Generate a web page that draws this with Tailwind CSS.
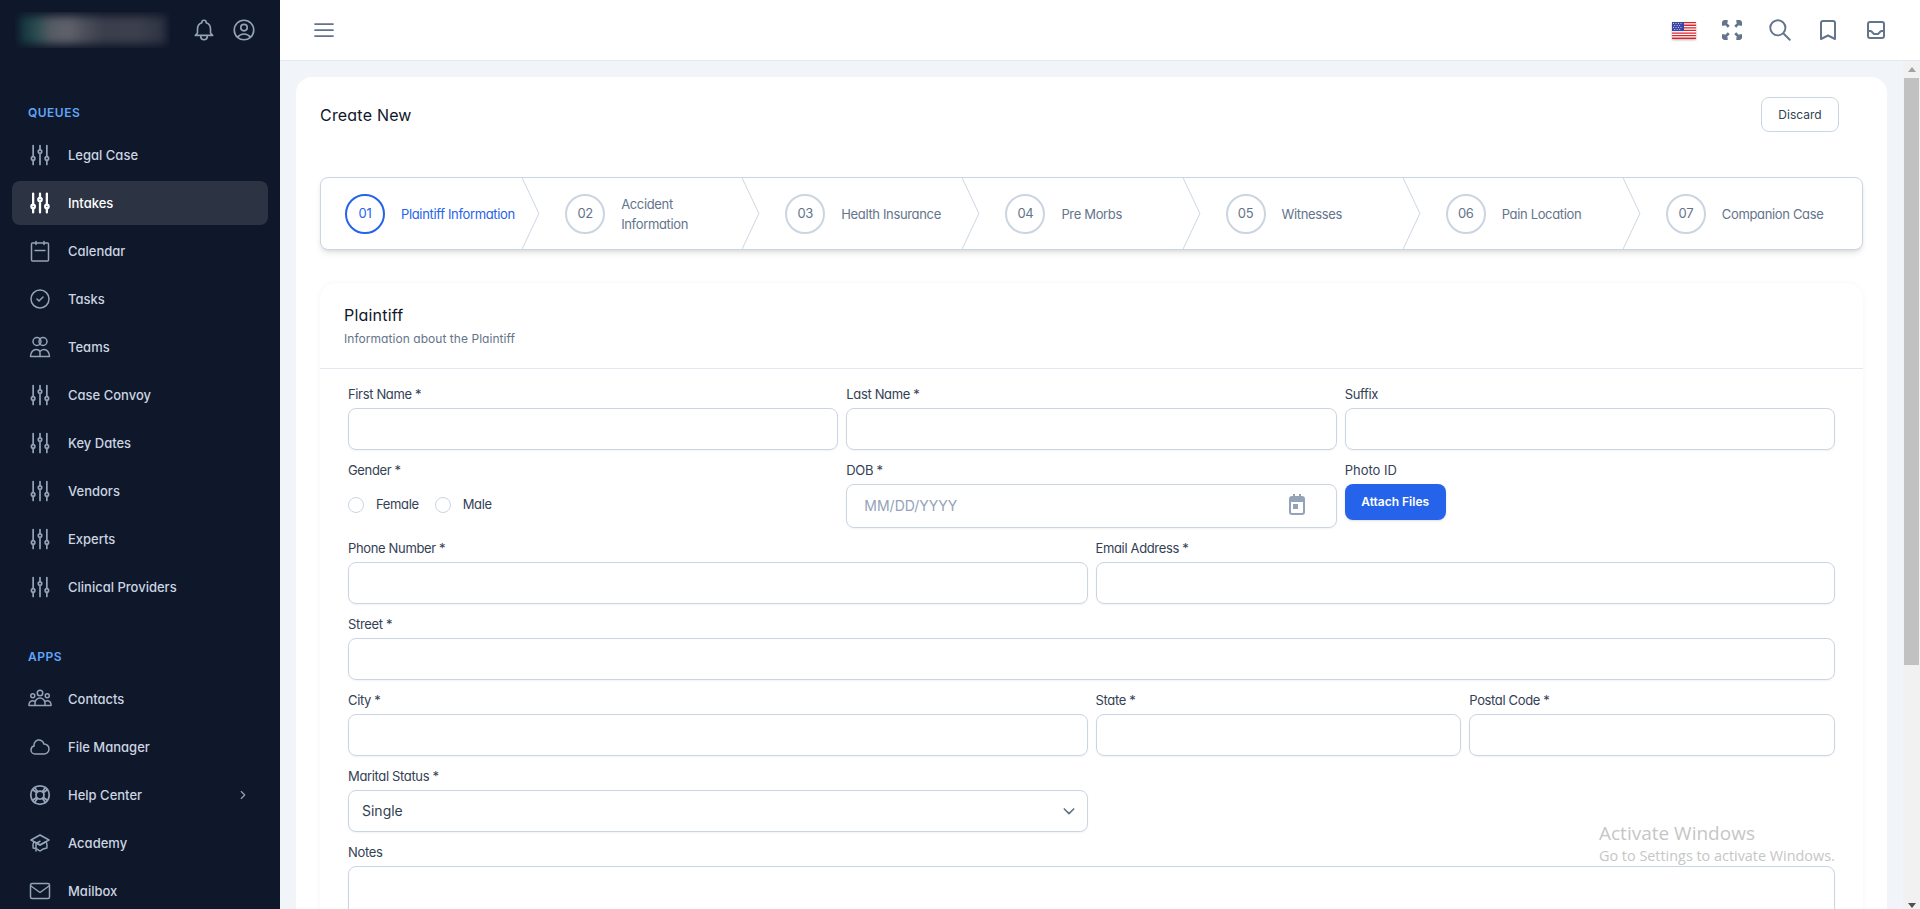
<!DOCTYPE html>
<html lang="en">
    <head>
        <meta charset="utf-8">
        <title>Create New</title>
        <script src="https://cdn.jsdelivr.net/npm/@tailwindcss/browser@4"></script>
    </head>
    <body class="relative flex w-screen h-screen overflow-hidden bg-[#f1f5f9] text-[#334155] font-['Inter',sans-serif] [font-feature-settings:'cv11']">

        <!-- sidebar -->
        <aside class="w-[280px] shrink-0 h-full bg-[#0f172a] text-[13px] font-medium text-[#cbd5e1]">
            <div class="flex items-center h-[60px]">
                <div class="ml-[15px] w-[155px] h-[36px] p-[4px] overflow-hidden">
                    <div class="w-full h-full blur-[4px] bg-[linear-gradient(90deg,#12303a_0%,#2a4d52_12%,#585c64_22%,#5f626b_34%,#4a4d59_46%,#3a3e4c_58%,#3d404e_80%,#2d3242_100%)]"></div>
                </div>
                <svg class="w-[26px] h-[26px] ml-[21px] text-[#94a3b8]" fill="none" viewBox="0 0 24 24" stroke="currentColor" stroke-width="1.5"><path stroke-linecap="round" stroke-linejoin="round" d="M15 17h5l-1.405-1.405A2.032 2.032 0 0118 14.158V11a6.002 6.002 0 00-4-5.659V5a2 2 0 10-4 0v.341C7.67 6.165 6 8.388 6 11v3.159c0 .538-.214 1.055-.595 1.436L4 17h5m6 0v1a3 3 0 11-6 0v-1m6 0H9"/></svg>
                <svg class="w-[26px] h-[26px] ml-[14px] text-[#94a3b8]" fill="none" viewBox="0 0 24 24" stroke="currentColor" stroke-width="1.5"><path stroke-linecap="round" stroke-linejoin="round" d="M17.982 18.725A7.488 7.488 0 0 0 12 15.75a7.488 7.488 0 0 0-5.982 2.975m11.963 0a9 9 0 1 0-11.963 0m11.963 0A8.966 8.966 0 0 1 12 21a8.966 8.966 0 0 1-5.982-2.275M15 9.75a3 3 0 1 1-6 0 3 3 0 0 1 6 0Z"/></svg>
            </div>

            <nav class="pt-[43px] px-3">
                <div class="h-5 leading-5 pl-4 mb-[10px] text-[12px] font-semibold tracking-[0.5px] text-[#60a5fa]">QUEUES</div>
                <ul class="space-y-1">
                    <li class="flex items-center h-11 pl-4 rounded-lg">
                        <svg class="w-6 h-6 mr-4 text-[#94a3b8]" fill="none" viewBox="2.5 1.5 19 21" stroke="currentColor" stroke-width="1.5" stroke-linecap="round"><path d="M6 13.5V3.75m0 9.75a1.5 1.5 0 0 1 0 3m0-3a1.5 1.5 0 0 0 0 3m0 3.75V16.5m12-3V3.75m0 9.75a1.5 1.5 0 0 1 0 3m0-3a1.5 1.5 0 0 0 0 3m0 3.75V16.5m-6-9V3.75m0 3.75a1.5 1.5 0 0 1 0 3m0-3a1.5 1.5 0 0 0 0 3m0 9.75V10.5"/></svg>
                        <span class="pt-[2px]">Legal Case</span>
                    </li>
                    <li class="flex items-center h-11 pl-4 rounded-lg bg-white/12 text-white">
                        <svg class="w-6 h-6 mr-4 text-white" fill="none" viewBox="2.5 1.5 19 21" stroke="currentColor" stroke-width="2" stroke-linecap="round"><path d="M6 13.5V3.75m0 9.75a1.5 1.5 0 0 1 0 3m0-3a1.5 1.5 0 0 0 0 3m0 3.75V16.5m12-3V3.75m0 9.75a1.5 1.5 0 0 1 0 3m0-3a1.5 1.5 0 0 0 0 3m0 3.75V16.5m-6-9V3.75m0 3.75a1.5 1.5 0 0 1 0 3m0-3a1.5 1.5 0 0 0 0 3m0 9.75V10.5"/></svg>
                        <span class="pt-[2px]">Intakes</span>
                    </li>
                    <li class="flex items-center h-11 pl-4 rounded-lg">
                        <svg class="w-6 h-6 mr-4 text-[#94a3b8]" fill="none" viewBox="0 0 24 24" stroke="currentColor" stroke-width="1.5" stroke-linecap="round" stroke-linejoin="round"><path d="M8 2.5v3M16 2.5v3M7 11.5h10M4.5 4h15a1 1 0 0 1 1 1v16a1 1 0 0 1-1 1h-15a1 1 0 0 1-1-1V5a1 1 0 0 1 1-1z"/></svg>
                        <span class="pt-[2px]">Calendar</span>
                    </li>
                    <li class="flex items-center h-11 pl-4 rounded-lg">
                        <svg class="w-6 h-6 mr-4 text-[#94a3b8]" fill="none" viewBox="0 0 24 24" stroke="currentColor" stroke-width="1.5" stroke-linecap="round" stroke-linejoin="round"><path d="M9 12l2 2 4-4m6 2a9 9 0 11-18 0 9 9 0 0118 0z"/></svg>
                        <span class="pt-[2px]">Tasks</span>
                    </li>
                    <li class="flex items-center h-11 pl-4 rounded-lg">
                        <svg class="w-6 h-6 mr-4 text-[#94a3b8]" fill="none" viewBox="0 0 24 24" stroke="currentColor" stroke-width="1.5" stroke-linecap="round" stroke-linejoin="round"><circle cx="9" cy="6.5" r="4"/><circle cx="15" cy="6.5" r="4"/><path d="M2.5 21.5c0-4 2.5-7 5.5-7s4 1.5 4 3.5v3.5zM12 21.5h9.5c0-4-2.5-7-5.5-7-1.5 0-2.5.5-3.5 1.5"/></svg>
                        <span class="pt-[2px]">Teams</span>
                    </li>
                    <li class="flex items-center h-11 pl-4 rounded-lg">
                        <svg class="w-6 h-6 mr-4 text-[#94a3b8]" fill="none" viewBox="2.5 1.5 19 21" stroke="currentColor" stroke-width="1.5" stroke-linecap="round"><path d="M6 13.5V3.75m0 9.75a1.5 1.5 0 0 1 0 3m0-3a1.5 1.5 0 0 0 0 3m0 3.75V16.5m12-3V3.75m0 9.75a1.5 1.5 0 0 1 0 3m0-3a1.5 1.5 0 0 0 0 3m0 3.75V16.5m-6-9V3.75m0 3.75a1.5 1.5 0 0 1 0 3m0-3a1.5 1.5 0 0 0 0 3m0 9.75V10.5"/></svg>
                        <span class="pt-[2px]">Case Convoy</span>
                    </li>
                    <li class="flex items-center h-11 pl-4 rounded-lg">
                        <svg class="w-6 h-6 mr-4 text-[#94a3b8]" fill="none" viewBox="2.5 1.5 19 21" stroke="currentColor" stroke-width="1.5" stroke-linecap="round"><path d="M6 13.5V3.75m0 9.75a1.5 1.5 0 0 1 0 3m0-3a1.5 1.5 0 0 0 0 3m0 3.75V16.5m12-3V3.75m0 9.75a1.5 1.5 0 0 1 0 3m0-3a1.5 1.5 0 0 0 0 3m0 3.75V16.5m-6-9V3.75m0 3.75a1.5 1.5 0 0 1 0 3m0-3a1.5 1.5 0 0 0 0 3m0 9.75V10.5"/></svg>
                        <span class="pt-[2px]">Key Dates</span>
                    </li>
                    <li class="flex items-center h-11 pl-4 rounded-lg">
                        <svg class="w-6 h-6 mr-4 text-[#94a3b8]" fill="none" viewBox="2.5 1.5 19 21" stroke="currentColor" stroke-width="1.5" stroke-linecap="round"><path d="M6 13.5V3.75m0 9.75a1.5 1.5 0 0 1 0 3m0-3a1.5 1.5 0 0 0 0 3m0 3.75V16.5m12-3V3.75m0 9.75a1.5 1.5 0 0 1 0 3m0-3a1.5 1.5 0 0 0 0 3m0 3.75V16.5m-6-9V3.75m0 3.75a1.5 1.5 0 0 1 0 3m0-3a1.5 1.5 0 0 0 0 3m0 9.75V10.5"/></svg>
                        <span class="pt-[2px]">Vendors</span>
                    </li>
                    <li class="flex items-center h-11 pl-4 rounded-lg">
                        <svg class="w-6 h-6 mr-4 text-[#94a3b8]" fill="none" viewBox="2.5 1.5 19 21" stroke="currentColor" stroke-width="1.5" stroke-linecap="round"><path d="M6 13.5V3.75m0 9.75a1.5 1.5 0 0 1 0 3m0-3a1.5 1.5 0 0 0 0 3m0 3.75V16.5m12-3V3.75m0 9.75a1.5 1.5 0 0 1 0 3m0-3a1.5 1.5 0 0 0 0 3m0 3.75V16.5m-6-9V3.75m0 3.75a1.5 1.5 0 0 1 0 3m0-3a1.5 1.5 0 0 0 0 3m0 9.75V10.5"/></svg>
                        <span class="pt-[2px]">Experts</span>
                    </li>
                    <li class="flex items-center h-11 pl-4 rounded-lg">
                        <svg class="w-6 h-6 mr-4 text-[#94a3b8]" fill="none" viewBox="2.5 1.5 19 21" stroke="currentColor" stroke-width="1.5" stroke-linecap="round"><path d="M6 13.5V3.75m0 9.75a1.5 1.5 0 0 1 0 3m0-3a1.5 1.5 0 0 0 0 3m0 3.75V16.5m12-3V3.75m0 9.75a1.5 1.5 0 0 1 0 3m0-3a1.5 1.5 0 0 0 0 3m0 3.75V16.5m-6-9V3.75m0 3.75a1.5 1.5 0 0 1 0 3m0-3a1.5 1.5 0 0 0 0 3m0 9.75V10.5"/></svg>
                        <span class="pt-[2px]">Clinical Providers</span>
                    </li>
                </ul>

                <div class="h-5 leading-5 pl-4 mt-[38px] mb-[10px] text-[12px] font-semibold tracking-[0.5px] text-[#60a5fa]">APPS</div>
                <ul class="space-y-1">
                    <li class="flex items-center h-11 pl-4 rounded-lg">
                        <svg class="w-6 h-6 mr-4 text-[#94a3b8]" fill="none" viewBox="0 0 24 24" stroke="currentColor" stroke-width="1.5" stroke-linecap="round" stroke-linejoin="round"><circle cx="12" cy="6" r="2.75"/><circle cx="4.75" cy="8.75" r="2"/><circle cx="19.25" cy="8.75" r="2"/><path d="M1 18.5h22v-1.5a3.5 3.5 0 0 0-6-2.2M1 18.5v-1.5a3.5 3.5 0 0 1 6-2.2M7 18.5V16a5 5 0 0 1 10 0v2.5"/></svg>
                        <span class="pt-[2px]">Contacts</span>
                    </li>
                    <li class="flex items-center h-11 pl-4 rounded-lg">
                        <svg class="w-6 h-6 mr-4 text-[#94a3b8]" fill="none" viewBox="0 0 24 24" stroke="currentColor" stroke-width="1.5" stroke-linecap="round" stroke-linejoin="round"><path d="M3 15a4 4 0 004 4h9a5 5 0 10-.1-9.999 5.002 5.002 0 10-9.78 2.096A4.001 4.001 0 003 15z"/></svg>
                        <span class="pt-[2px]">File Manager</span>
                    </li>
                    <li class="flex items-center h-11 pl-4 rounded-lg">
                        <svg class="w-6 h-6 mr-4 text-[#94a3b8]" fill="none" viewBox="0 0 24 24" stroke="currentColor" stroke-width="1.75" stroke-linecap="round" stroke-linejoin="round"><circle cx="12" cy="12" r="9.25"/><circle cx="12" cy="12" r="4"/><path d="M6.5 4.5l3 4M17.5 4.5l-3 4M6.5 19.5l3-4M17.5 19.5l-3-4M4.5 6.5l4 3M19.5 6.5l-4 3M4.5 17.5l4-3M19.5 17.5l-4-3"/></svg>
                        <span class="pt-[2px]">Help Center</span>
                        <svg class="w-3.5 h-3.5 ml-auto mr-[18px] text-[#94a3b8]" fill="none" viewBox="0 0 24 24" stroke="currentColor" stroke-width="2" stroke-linecap="round" stroke-linejoin="round"><path d="M9 6l6 6-6 6"/></svg>
                    </li>
                    <li class="flex items-center h-11 pl-4 rounded-lg">
                        <svg class="w-6 h-6 mr-4 text-[#94a3b8]" fill="none" viewBox="0 0 24 24" stroke="currentColor" stroke-width="1.5" stroke-linecap="round" stroke-linejoin="round"><path d="M12 14l9-5-9-5-9 5 9 5z"/><path d="M12 14l6.16-3.422a12.083 12.083 0 01.665 6.479A11.952 11.952 0 0012 20.055a11.952 11.952 0 00-6.824-2.998 12.078 12.078 0 01.665-6.479L12 14zm-4 6v-7.5l4-2.222"/></svg>
                        <span class="pt-[2px]">Academy</span>
                    </li>
                    <li class="flex items-center h-11 pl-4 rounded-lg">
                        <svg class="w-6 h-6 mr-4 text-[#94a3b8]" fill="none" viewBox="0 0 24 24" stroke="currentColor" stroke-width="1.5" stroke-linecap="round" stroke-linejoin="round"><rect x="2.5" y="4.5" width="19" height="15" rx="1.5"/><path d="M3 7l9 6.5L21 7"/></svg>
                        <span class="pt-[2px]">Mailbox</span>
                    </li>
                </ul>
            </nav>
        </aside>

        <div class="flex flex-col flex-1 min-w-0 h-full">
            <!-- top bar -->
            <header class="flex items-center shrink-0 h-[61px] bg-white border-b border-[#e2e8f0] text-[#64748b]">
                <svg class="w-6 h-6 ml-[32px]" fill="none" viewBox="0 0 24 24" stroke="currentColor" stroke-width="1.75" stroke-linecap="round"><path d="M3 6h18M3 12h18M3 18h18"/></svg>
                <svg class="w-6 h-[17px] ml-auto drop-shadow-[0_1px_1px_rgba(0,0,0,0.3)]" viewBox="0 0 24 17">
                    <rect width="24" height="17" fill="#fff"/>
                    <path d="M0 0h24v1.3H0zM0 2.6h24v1.3H0zM0 5.2h24v1.3H0zM0 7.8h24v1.3H0zM0 10.4h24v1.3H0zM0 13h24v1.3H0zM0 15.6h24V17H0z" fill="#d8232a"/>
                    <rect width="12" height="9.1" fill="#3b44a4"/>
                    <path d="M1 1h1v1H1zM3.5 1h1v1h-1zM6 1h1v1H6zM8.5 1h1v1h-1zM2.2 3h1v1h-1zM4.7 3h1v1h-1zM7.2 3h1v1h-1zM1 5h1v1H1zM3.5 5h1v1h-1zM6 5h1v1H6zM8.5 5h1v1h-1zM2.2 7h1v1h-1zM4.7 7h1v1h-1zM7.2 7h1v1h-1z" fill="#c9cdf0"/>
                </svg>
                <svg class="w-[26px] h-[26px] ml-[23px]" fill="none" viewBox="0 0 24 24" stroke="currentColor" stroke-width="2.5"><path d="M4 8V4m0 0h4M4 4l5 5m11-1V4m0 0h-4m4 0l-5 5M4 16v4m0 0h4m-4 0l5-5m11 1v4m0 0h-4m4 0l-5-5"/></svg>
                <svg class="w-[26px] h-[26px] ml-[22px]" fill="none" viewBox="0 0 24 24" stroke="currentColor" stroke-width="1.75" stroke-linecap="round" stroke-linejoin="round"><path d="M21 21l-6-6m2-5a7 7 0 11-14 0 7 7 0 0114 0z"/></svg>
                <svg class="w-6 h-6 ml-[23px]" fill="none" viewBox="0 0 24 24" stroke="currentColor" stroke-width="2" stroke-linecap="round" stroke-linejoin="round"><path d="M5 5a2 2 0 012-2h10a2 2 0 012 2v16l-7-3.5L5 21V5z"/></svg>
                <svg class="w-6 h-6 ml-6 mr-[32px]" fill="none" viewBox="0 0 24 24" stroke="currentColor" stroke-width="2" stroke-linecap="round" stroke-linejoin="round"><path d="M20 13V6a2 2 0 00-2-2H6a2 2 0 00-2 2v7m16 0v5a2 2 0 01-2 2H6a2 2 0 01-2-2v-5m16 0h-2.586a1 1 0 00-.707.293l-2.414 2.414a1 1 0 01-.707.293h-3.172a1 1 0 01-.707-.293l-2.414-2.414A1 1 0 006.586 13H4"/></svg>
            </header>

            <div class="flex flex-1 min-h-0">
                <main class="flex-1 min-w-0 pl-4 pr-4 pt-4 overflow-hidden">
                    <div class="rounded-t-2xl bg-white px-6 pb-10">

                        <div class="flex items-center justify-between pt-5 pr-6">
                            <h1 class="text-[16px] tracking-[0.2px] text-[#0f172a]">Create New</h1>
                            <button class="h-[35px] w-[78px] border border-[#cbd5e1] rounded-lg text-[12px] text-[#334155] [font-feature-settings:normal]">Discard</button>
                        </div>

                        <!-- steps -->
                        <ol class="flex mt-[45px] h-[73px] bg-white border border-[#cbd5e1] rounded-lg shadow-md text-[13px] tracking-[-0.35px] text-[#64748b]">
                            <li class="relative flex flex-1 items-center gap-4 pl-6 text-[#2563eb]">
                                <span class="flex items-center justify-center w-10 h-10 shrink-0 rounded-full border-2 border-[#2563eb]">01</span>
                                <span class="leading-5">Plaintiff Information</span>
                                <svg class="absolute right-px top-0 w-[18px] h-full text-[#cbd5e1]" viewBox="0 0 18 72" fill="none" stroke="currentColor"><path d="M0 0l17 36L0 72"/></svg>
                            </li>
                            <li class="relative flex flex-1 items-center gap-4 pl-6">
                                <span class="flex items-center justify-center w-10 h-10 shrink-0 rounded-full border-2 border-[#cbd5e1]">02</span>
                                <span class="leading-5">Accident<br>Information</span>
                                <svg class="absolute right-px top-0 w-[18px] h-full text-[#cbd5e1]" viewBox="0 0 18 72" fill="none" stroke="currentColor"><path d="M0 0l17 36L0 72"/></svg>
                            </li>
                            <li class="relative flex flex-1 items-center gap-4 pl-6">
                                <span class="flex items-center justify-center w-10 h-10 shrink-0 rounded-full border-2 border-[#cbd5e1]">03</span>
                                <span class="leading-5">Health Insurance</span>
                                <svg class="absolute right-px top-0 w-[18px] h-full text-[#cbd5e1]" viewBox="0 0 18 72" fill="none" stroke="currentColor"><path d="M0 0l17 36L0 72"/></svg>
                            </li>
                            <li class="relative flex flex-1 items-center gap-4 pl-6">
                                <span class="flex items-center justify-center w-10 h-10 shrink-0 rounded-full border-2 border-[#cbd5e1]">04</span>
                                <span class="leading-5">Pre Morbs</span>
                                <svg class="absolute right-px top-0 w-[18px] h-full text-[#cbd5e1]" viewBox="0 0 18 72" fill="none" stroke="currentColor"><path d="M0 0l17 36L0 72"/></svg>
                            </li>
                            <li class="relative flex flex-1 items-center gap-4 pl-6">
                                <span class="flex items-center justify-center w-10 h-10 shrink-0 rounded-full border-2 border-[#cbd5e1]">05</span>
                                <span class="leading-5">Witnesses</span>
                                <svg class="absolute right-px top-0 w-[18px] h-full text-[#cbd5e1]" viewBox="0 0 18 72" fill="none" stroke="currentColor"><path d="M0 0l17 36L0 72"/></svg>
                            </li>
                            <li class="relative flex flex-1 items-center gap-4 pl-6">
                                <span class="flex items-center justify-center w-10 h-10 shrink-0 rounded-full border-2 border-[#cbd5e1]">06</span>
                                <span class="leading-5">Pain Location</span>
                                <svg class="absolute right-px top-0 w-[18px] h-full text-[#cbd5e1]" viewBox="0 0 18 72" fill="none" stroke="currentColor"><path d="M0 0l17 36L0 72"/></svg>
                            </li>
                            <li class="relative flex flex-1 items-center gap-4 pl-6">
                                <span class="flex items-center justify-center w-10 h-10 shrink-0 rounded-full border-2 border-[#cbd5e1]">07</span>
                                <span class="leading-5">Companion Case</span>
                            </li>
                        </ol>

                        <!-- plaintiff form -->
                        <section class="mt-[33px] bg-white rounded-2xl shadow-[0_0_6px_rgba(15,23,42,0.04)]">
                            <div class="h-[86px] pl-6 pt-[21px] border-b border-[#e2e8f0]">
                                <h2 class="text-[16px] leading-[22px] tracking-[0.2px] text-[#0f172a]">Plaintiff</h2>
                                <p class="mt-[3px] text-[12px] leading-5 tracking-[0.05px] text-[#64748b]">Information about the Plaintiff</p>
                            </div>
                            <form class="grid grid-cols-12 gap-x-2 gap-y-[10px] pl-7 pr-7 pt-[15px] pb-6 text-[13px] tracking-[-0.35px]">
                                <div class="col-span-4">
                                    <label for="first-name" class="block h-5 leading-5 mb-1">First Name *</label>
                                    <input id="first-name" type="text" class="block w-full h-[42px] border border-[#cbd5e1] rounded-lg shadow-xs">
                                </div>
                                <div class="col-span-4">
                                    <label for="last-name" class="block h-5 leading-5 mb-1">Last Name *</label>
                                    <input id="last-name" type="text" class="block w-full h-[42px] border border-[#cbd5e1] rounded-lg shadow-xs">
                                </div>
                                <div class="col-span-4">
                                    <label for="suffix" class="block h-5 leading-5 mb-1">Suffix</label>
                                    <input id="suffix" type="text" class="block w-full h-[42px] border border-[#cbd5e1] rounded-lg shadow-xs">
                                </div>

                                <div class="col-span-4">
                                    <div class="h-5 leading-5 mb-1">Gender *</div>
                                    <div class="flex items-center h-[42px]">
                                        <input id="female" name="gender" type="radio" class="appearance-none w-4 h-4 rounded-full border border-[#cbd5e1]">
                                        <label for="female" class="ml-3">Female</label>
                                        <input id="male" name="gender" type="radio" class="appearance-none w-4 h-4 ml-[16px] rounded-full border border-[#cbd5e1]">
                                        <label for="male" class="ml-3">Male</label>
                                    </div>
                                </div>
                                <div class="col-span-4">
                                    <label for="dob" class="block h-5 leading-5 mb-1">DOB *</label>
                                    <div class="relative">
                                        <input id="dob" type="text" placeholder="MM/DD/YYYY" class="block w-full h-11 pl-[17px] pb-[2px] border border-[#cbd5e1] rounded-lg shadow-xs text-[14px] tracking-normal placeholder:text-[#94a3b8]">
                                        <svg class="absolute right-[28px] top-[9px] w-6 h-6 text-[#94a3b8]" viewBox="0 0 24 24" fill="currentColor"><path d="M17 3h-1V1h-2v2H10V1H8v2H7a3 3 0 0 0-3 3v13a3 3 0 0 0 3 3h10a3 3 0 0 0 3-3V6a3 3 0 0 0-3-3zm1 16a1 1 0 0 1-1 1H7a1 1 0 0 1-1-1V9h12v10z"/><path d="M8 11h5v5H8z"/></svg>
                                    </div>
                                </div>
                                <div class="col-span-4">
                                    <div class="h-5 leading-5 mb-1 tracking-normal [font-feature-settings:normal]">Photo ID</div>
                                    <button type="button" class="block w-[101px] h-9 bg-[#2563eb] text-white rounded-lg text-[12px] font-semibold tracking-normal shadow-sm [font-feature-settings:normal]">Attach Files</button>
                                </div>

                                <div class="col-span-6">
                                    <label for="phone" class="block h-5 leading-5 mb-1">Phone Number *</label>
                                    <input id="phone" type="text" class="block w-full h-[42px] border border-[#cbd5e1] rounded-lg shadow-xs">
                                </div>
                                <div class="col-span-6">
                                    <label for="email" class="block h-5 leading-5 mb-1">Email Address *</label>
                                    <input id="email" type="text" class="block w-full h-[42px] border border-[#cbd5e1] rounded-lg shadow-xs">
                                </div>

                                <div class="col-span-12">
                                    <label for="street" class="block h-5 leading-5 mb-1">Street *</label>
                                    <input id="street" type="text" class="block w-full h-[42px] border border-[#cbd5e1] rounded-lg shadow-xs">
                                </div>

                                <div class="col-span-6">
                                    <label for="city" class="block h-5 leading-5 mb-1">City *</label>
                                    <input id="city" type="text" class="block w-full h-[42px] border border-[#cbd5e1] rounded-lg shadow-xs">
                                </div>
                                <div class="col-span-3">
                                    <label for="state" class="block h-5 leading-5 mb-1">State *</label>
                                    <input id="state" type="text" class="block w-full h-[42px] border border-[#cbd5e1] rounded-lg shadow-xs">
                                </div>
                                <div class="col-span-3">
                                    <label for="postal" class="block h-5 leading-5 mb-1">Postal Code *</label>
                                    <input id="postal" type="text" class="block w-full h-[42px] border border-[#cbd5e1] rounded-lg shadow-xs">
                                </div>

                                <div class="col-span-6">
                                    <label for="marital" class="block h-5 leading-5 mb-1">Marital Status *</label>
                                    <div class="relative">
                                        <select id="marital" class="block w-full h-[42px] pl-[13px] pb-[2px] appearance-none bg-white border border-[#cbd5e1] rounded-lg shadow-xs text-[14px] tracking-normal">
                                            <option>Single</option>
                                        </select>
                                        <svg class="absolute right-[11px] top-[13px] w-4 h-4 text-[#64748b]" fill="none" viewBox="0 0 24 24" stroke="currentColor" stroke-width="2.5" stroke-linecap="round" stroke-linejoin="round"><path d="M5 9l7 7 7-7"/></svg>
                                    </div>
                                </div>
                                <div class="col-span-6"></div>

                                <div class="col-span-12">
                                    <label for="notes" class="block h-5 leading-5 mb-1">Notes</label>
                                    <textarea id="notes" class="block w-full h-[100px] border border-[#cbd5e1] rounded-lg shadow-xs"></textarea>
                                </div>
                            </form>
                        </section>
                    </div>
                </main>

                <!-- page scrollbar -->
                <div class="flex flex-col items-center shrink-0 w-[17px] bg-[#f1f1f1]">
                    <div class="mt-[6px] w-0 h-0 border-x-[4px] border-x-transparent border-b-[5px] border-b-[#a3a3a3]"></div>
                    <div class="mt-[6px] w-[15px] h-[587px] bg-[#c1c1c1]"></div>
                    <div class="mt-auto mb-[1px] w-0 h-0 border-x-[4px] border-x-transparent border-t-[5px] border-t-[#505050]"></div>
                </div>
            </div>
        </div>

        <!-- windows activation watermark -->
        <div class="absolute left-[1599px] top-[820px] pointer-events-none font-['Open_Sans',sans-serif] text-[#c6c6c6] [font-feature-settings:normal]">
            <div class="text-[19px] leading-[27px]">Activate Windows</div>
            <div class="text-[14.4px] leading-[18px]">Go to Settings to activate Windows.</div>
        </div>
    </body>
</html>
